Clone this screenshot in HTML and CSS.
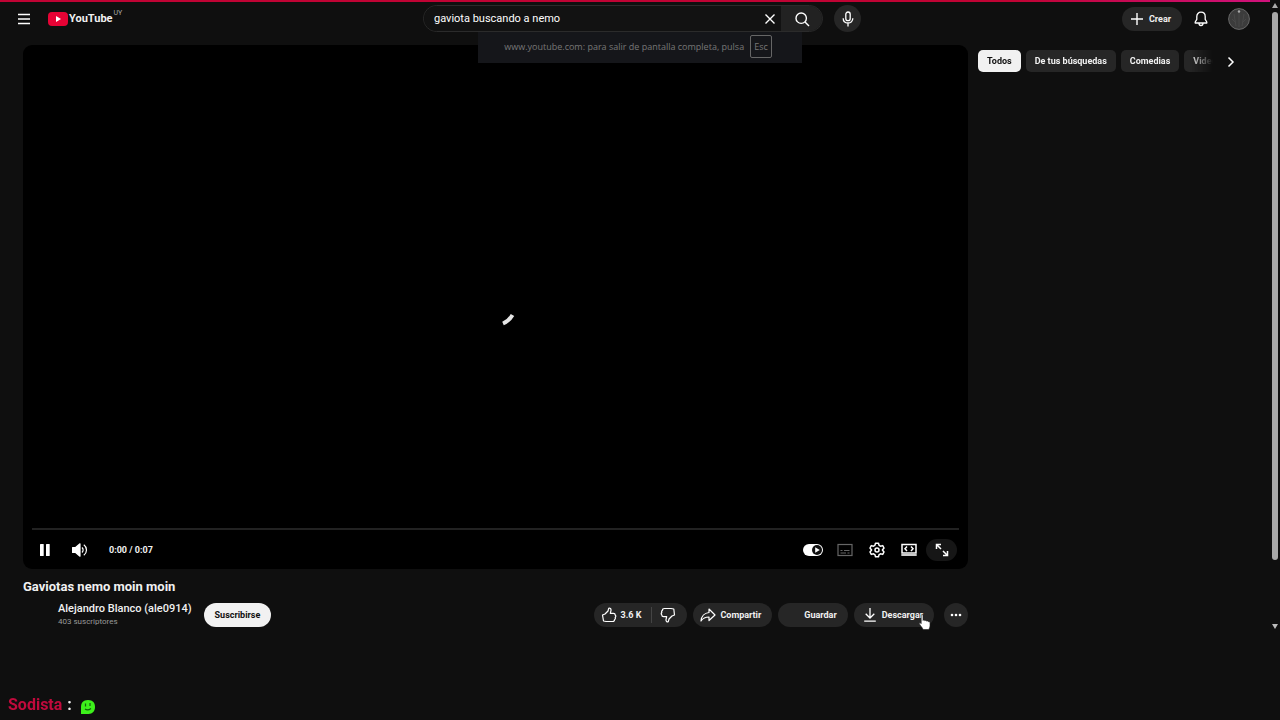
FILE: index.html
```
<!DOCTYPE html>
<html lang="es">
<head>
  <meta charset="UTF-8">
  <meta name="viewport" content="width=device-width, initial-scale=1">
  <title>Gaviotas nemo moin moin - YouTube</title>
  <link rel="stylesheet" href="styles.css">
</head>
<body>
  <div class="load-bar"></div>

  <header class="topbar">
    <div class="topbar-start">
      <button class="icon-btn" aria-label="Menú">
        <svg width="14" height="14" viewBox="0 0 14 14"><path d="M1 2.500h12M1 7h12M1 11.500h12" stroke="#fff" stroke-width="1.500"/></svg>
      </button>
      <a class="logo" href="#">
        <svg width="20" height="14" viewBox="0 0 20 14"><rect width="20" height="14" rx="4" fill="#e60335"/><path d="M8 4l5 3-5 3z" fill="#fff"/></svg>
        <span class="logo-name">YouTube</span>
        <span class="logo-country">UY</span>
      </a>
    </div>

    <div class="topbar-center">
      <form class="search">
        <input class="search-input" type="text" aria-label="Buscar" value="gaviota buscando a nemo">
        <button class="search-clear" type="button" aria-label="Borrar">
          <svg width="12" height="12" viewBox="0 0 12 12"><path d="M1.500 1.500l9 9M10.500 1.500l-9 9" stroke="#fff" stroke-width="1.400"/></svg>
        </button>
        <button class="search-btn" type="button" aria-label="Buscar">
          <svg width="16" height="16" viewBox="0 0 16 16" fill="none" stroke="#fff" stroke-width="1.400"><circle cx="7.200" cy="7.200" r="5.200"/><path d="M11 11l4 4"/></svg>
        </button>
      </form>
      <button class="round-btn" aria-label="Buscar por voz">
        <svg width="14" height="16" viewBox="0 0 14 16" fill="none" stroke="#fff" stroke-width="1.300"><rect x="4.800" y="1" width="4.400" height="8.600" rx="2.200"/><path d="M2.200 7.200c0 3 2 4.800 4.800 4.800s4.800-1.800 4.800-4.800M7 12v3.500"/></svg>
      </button>
    </div>

    <div class="topbar-end">
      <button class="pill create">
        <svg width="14" height="14" viewBox="0 0 14 14"><path d="M7 1v12M1 7h12" stroke="#fff" stroke-width="1.400"/></svg>
        Crear
      </button>
      <button class="icon-btn" aria-label="Notificaciones">
        <svg width="16" height="16" viewBox="0 0 16 16" fill="none" stroke="#fff" stroke-width="1.300" stroke-linejoin="round"><path d="M8 1.200c-2.600 0-4.200 1.900-4.200 4.200v3L2.200 11v1h11.600v-1l-1.600-2.600v-3C12.200 3.100 10.600 1.200 8 1.200zM6 12.200c0 1.400.8 2.300 2 2.300s2-.9 2-2.300"/></svg>
      </button>
      <button class="icon-btn" aria-label="Cuenta">
        <svg width="22" height="22" viewBox="0 0 22 22"><circle cx="11" cy="11" r="10.400" fill="#3c3c3c" stroke="#686868"/><path d="M11 3v16M6 6l2 12M16 6l-2 12M4 11l4 4M18 11l-4 4" stroke="#484848"/><circle cx="11" cy="3.500" r="1.200" fill="#aaa"/></svg>
      </button>
    </div>
  </header>

  <div class="fullscreen-note">
    <span>www.youtube.com: para salir de pantalla completa, pulsa</span>
    <kbd>Esc</kbd>
  </div>

  <main class="watch">
    <section class="primary">
      <div class="player">
        <div class="player-view">
          <svg class="spinner" width="50" height="50" viewBox="0 0 50 50"><path d="M32 36.500Q38 34 41.500 28" fill="none" stroke="#e6e6e6" stroke-width="4"/></svg>
        </div>
        <div class="progress"></div>
        <div class="controls">
          <button class="icon-btn" aria-label="Pausa">
            <svg width="12" height="14" viewBox="0 0 12 14" fill="#fff"><rect x="1" y="1" width="3.700" height="12" rx=".5"/><rect x="7" y="1" width="3.700" height="12" rx=".5"/></svg>
          </button>
          <button class="icon-btn" aria-label="Silenciar">
            <svg width="16" height="14" viewBox="0 0 16 14" fill="none" stroke="#fff" stroke-width="1.200"><path d="M.6 4.500v5h3L8 13.200V.8L3.600 4.500z" fill="#fff" stroke-linejoin="round"/><path d="M10 4.500c1.500 1.400 1.500 3.600 0 5M11.800 1.800c3.600 2.600 3.600 7.800 0 10.400"/></svg>
          </button>
          <span class="time">0:00 / 0:07</span>
          <div class="controls-end">
            <button class="icon-btn" aria-label="Reproducción automática">
              <svg width="22" height="14" viewBox="0 0 22 14"><rect x="1" y="1" width="20" height="12" rx="6" fill="#fff"/><circle cx="15" cy="7" r="5" fill="#111"/><path d="M13.200 4.200l4.600 2.800-4.600 2.800z" fill="#fff"/></svg>
            </button>
            <button class="icon-btn" aria-label="Subtítulos">
              <svg width="16" height="14" viewBox="0 0 16 14" fill="none" stroke="#666" stroke-width="1.200"><rect x="1" y="1.500" width="14" height="11"/><path d="M3.500 7.500h2M7 7.500h5.500M3.500 10h5.500M10.500 10h2"/></svg>
            </button>
            <button class="icon-btn" aria-label="Configuración">
              <svg width="16" height="16" viewBox="0 0 16 16" fill="none" stroke="#fff" stroke-width="1.500" stroke-linejoin="round"><path d="M6.500 1.200h3l.6 2.200 1.400.8 2.200-.6 1.300 2.400L13.400 8l1.600 2-1.300 2.400-2.200-.6-1.400.8-.6 2.200h-3l-.6-2.200-1.400-.8-2.200.6L1 10l1.600-2L1 6l1.300-2.400 2.200.6 1.400-.8z"/><circle cx="8" cy="8" r="2"/></svg>
            </button>
            <button class="icon-btn" aria-label="Modo cine">
              <svg width="16" height="14" viewBox="0 0 16 14" fill="none" stroke="#fff" stroke-width="1.500"><rect x="1" y="1.500" width="14" height="8.500"/><path d="M6 3.500L4 5.700l2 2.200M10 3.500l2 2.200-2 2.200"/><path d="M.3 12h15.400" stroke="#ccc" stroke-width="2"/></svg>
            </button>
            <button class="fullscreen-btn" aria-label="Pantalla completa">
              <svg width="14" height="14" viewBox="0 0 14 14" fill="none" stroke="#fff" stroke-width="1.500"><path d="M1.500 6V1.500H6M1.500 1.500L6 6M12.500 8v4.500H8M12.500 12.500L8 8"/></svg>
            </button>
          </div>
        </div>
      </div>

      <h1 class="title">Gaviotas nemo moin moin</h1>

      <div class="meta">
        <div class="channel">
          <a class="channel-name" href="#">Alejandro Blanco (ale0914)</a>
          <span class="channel-subs">403 suscriptores</span>
        </div>
        <button class="pill subscribe">Suscribirse</button>

        <div class="actions">
          <div class="votes">
            <button class="pill like">
              <svg width="16" height="16" viewBox="0 0 16 16" fill="none" stroke="#fff" stroke-width="1.200" stroke-linejoin="round"><path d="M4 7L1.500 8l1 6L5 14.500h6.500c1.500 0 2-.8 2-1.800.8-.5 1-1.500.7-2.200.7-.8.7-1.800 0-2.500 0-1-.7-1.700-1.700-1.700H9.300l.7-3C10.200 1.800 9 .8 7.700 1.300L7 4z"/></svg>
              3.6 K
            </button>
            <button class="pill dislike" aria-label="No me gusta">
              <svg width="16" height="16" viewBox="0 0 16 16" fill="none" stroke="#fff" stroke-width="1.200" stroke-linejoin="round"><path d="M12 9l2.500-1-.7-6L11 1.500H4.500c-1.500 0-2 .8-2 1.800-.8.500-1 1.500-.7 2.200-.7.800-.7 1.800 0 2.500 0 1 .7 1.700 1.700 1.700h3.200l-.7 3c-.2 1.500 1 2.500 2.300 2L9 12z"/></svg>
            </button>
          </div>
          <button class="pill">
            <svg width="16" height="16" viewBox="0 0 16 16" fill="none" stroke="#fff" stroke-width="1.200" stroke-linejoin="round"><path d="M9 2l6 6-6 5.500V10c-3.500 0-6 1-8 4 .4-4.500 3.500-8 8-8.500z"/></svg>
            Compartir
          </button>
          <button class="pill save">Guardar</button>
          <button class="pill download">
            <svg width="14" height="16" viewBox="0 0 14 16" fill="none" stroke="#fff" stroke-width="1.300"><path d="M7 1v10M2.700 6.800L7 11l4.300-4.200M1.200 14.200h11.600"/></svg>
            Descargar
            <svg class="pointer" width="12" height="16" viewBox="0 0 12 16" fill="#fff" stroke="#222" stroke-width=".6"><path d="M2.200 1.500c0-1.200 1.800-1.200 1.800 0v5c.3-.8 1.800-.6 1.900.3.300-.7 1.700-.5 1.800.4.400-.6 1.700-.3 1.700.6.500-.4 1.600 0 1.600.8v3c0 2-.8 2.400-1 3.900H4c0-1.500-3.400-4.500-3.700-6 0-.9 1.200-.9 1.900.2z"/></svg>
          </button>
          <button class="round-btn more" aria-label="Más acciones">
            <svg width="12" height="4" viewBox="0 0 12 4" fill="#fff"><circle cx="2" cy="2" r="1.300"/><circle cx="6" cy="2" r="1.300"/><circle cx="10" cy="2" r="1.300"/></svg>
          </button>
        </div>
      </div>
    </section>

    <aside class="secondary">
      <div class="chips">
        <button class="chip chip-active">Todos</button>
        <button class="chip">De tus búsquedas</button>
        <button class="chip">Comedias</button>
        <button class="chip">Videos</button>
      </div>
      <button class="icon-btn" aria-label="Siguiente">
        <svg width="8" height="12" viewBox="0 0 8 12"><path d="M1.500 1.500L6 6l-4.500 4.500" fill="none" stroke="#fff" stroke-width="1.500"/></svg>
      </button>
    </aside>
  </main>

  <!-- Mensaje del chat -->
  <div class="chat-line">
    <span class="chat-user">Sodista</span>
    <span>:</span>
    <svg width="16" height="16" viewBox="0 0 16 16"><path d="M8 1c5 0 7 3 7 7s-2.500 7-6.500 7H1V8c0-4 2-7 7-7z" fill="#3df01b"/><path d="M5.500 4.500v3M10 4v3M5 10c2 1.500 4 1 6-.5" fill="none" stroke="#12600c" stroke-width="1.200"/></svg>
  </div>

  <div class="scrollbar">
    <svg width="6" height="5" viewBox="0 0 6 5"><path d="M3 0l3 5H0z" fill="#aaa"/></svg>
    <div class="scroll-track"><div class="scroll-thumb"></div></div>
    <svg width="6" height="5" viewBox="0 0 6 5"><path d="M0 0h6L3 5z" fill="#bbb"/></svg>
  </div>
</body>
</html>
```

FILE: styles.css
```
* {
  box-sizing: border-box;
}
body {
  margin: 0;
  min-height: 100vh;
  background-color: #0f0f0f;
  color: #f1f1f1;
  font-family: Roboto, "Liberation Sans", sans-serif;
  font-size: 9px;
  overflow: hidden;
}
button {
  font: inherit;
  color: inherit;
  border: none;
  background: none;
  padding: 0;
  cursor: pointer;
}
svg {
  display: block;
  flex: none;
}
a {
  color: inherit;
  text-decoration: none;
}
.icon-btn {
  display: flex;
  align-items: center;
  justify-content: center;
}
.load-bar {
  position: fixed;
  top: 0;
  left: 0;
  right: 10px;
  height: 2px;
  background: linear-gradient(to right, #c00334 80%, #d0127c);
}

/* Cabecera */
.topbar {
  display: grid;
  grid-template-columns: 1fr 438px 1fr;
  align-items: center;
  height: 37px;
  padding: 0 13px 0 17px;
}
.topbar-start,
.topbar-center,
.topbar-end {
  display: flex;
  align-items: center;
}
.topbar-start {
  gap: 17px;
}
.logo {
  display: flex;
  align-items: center;
  gap: 1px;
}
.logo-name {
  font-size: 11px;
  font-weight: 700;
}
.logo-country {
  align-self: flex-start;
  margin-top: -3px;
  font-size: 7px;
  color: #aaa;
}
.topbar-center {
  justify-content: space-between;
}
.search {
  display: flex;
  width: 400px;
  height: 27px;
  border: 1px solid #2b2b2b;
  border-radius: 14px;
  overflow: hidden;
}
.search-input {
  flex: 1;
  min-width: 0;
  padding: 0 10px;
  border: none;
  outline: none;
  background-color: #121212;
  color: #fff;
  font: 400 11px Roboto, sans-serif;
}
.search-clear {
  display: flex;
  align-items: center;
  justify-content: center;
  width: 22px;
  background-color: #121212;
}
.search-btn {
  display: flex;
  align-items: center;
  justify-content: center;
  width: 41px;
  background-color: #222;
}
.round-btn {
  display: flex;
  align-items: center;
  justify-content: center;
  width: 27px;
  height: 27px;
  border-radius: 50%;
  background-color: #262626;
}
.topbar-end {
  justify-content: flex-end;
  gap: 11px;
  padding-right: 17px;
}
.topbar-end .icon-btn + .icon-btn {
  margin-left: 8px;
}
.pill {
  display: flex;
  align-items: center;
  gap: 4px;
  height: 24px;
  padding: 0 11px 0 7px;
  border-radius: 12px;
  background-color: #262626;
  font-weight: 700;
}
.create {
  padding-left: 8px;
  gap: 5px;
}

/* Aviso de pantalla completa */
.fullscreen-note {
  position: absolute;
  top: 32px;
  left: 50%;
  z-index: 2;
  display: flex;
  align-items: center;
  justify-content: center;
  gap: 6px;
  width: 324px;
  height: 31px;
  padding: 0 4px 2px 0;
  transform: translateX(-50%);
  background-color: #15161a;
  color: #777;
  font-family: "Open Sans", "Noto Sans", sans-serif;
  font-size: 9px;
}
.fullscreen-note kbd {
  padding: 4px 3px;
  border: 1px solid #666;
  border-radius: 2px;
  font: inherit;
}

/* Contenido */
.watch {
  display: flex;
  gap: 10px;
  padding: 8px 38px 0 23px;
}
.primary {
  flex: 1;
  min-width: 0;
}
.player {
  display: flex;
  flex-direction: column;
  aspect-ratio: 945 / 524;
  border-radius: 9px;
  background-color: #000;
}
.player-view {
  display: flex;
  flex: 1;
  align-items: center;
  justify-content: center;
  padding-top: 50px;
}
.progress {
  height: 2px;
  margin: 0 9px;
  background-color: #222;
}
.controls {
  display: flex;
  align-items: center;
  height: 39px;
  padding: 0 11px 0 16px;
}
.controls .icon-btn + .icon-btn {
  margin-left: 21px;
}
.time {
  margin-left: 21px;
  font-weight: 700;
}
.controls-end {
  display: flex;
  align-items: center;
  margin-left: auto;
}
.controls .controls-end .icon-btn + .icon-btn {
  margin-left: 16px;
}
.controls-end .icon-btn:first-child {
  margin-right: -3px;
}
.fullscreen-btn {
  display: flex;
  align-items: center;
  justify-content: center;
  width: 31px;
  height: 22px;
  margin-left: 9px;
  border-radius: 11px;
  background-color: #161616;
}
.title {
  margin: 9px 0 0;
  font-size: 13px;
  line-height: 18px;
  font-weight: 700;
}
.meta {
  display: flex;
  align-items: center;
  margin-top: 5px;
}
.channel {
  display: flex;
  flex-direction: column;
  padding-left: 35px;
  margin-right: 12px;
}
.channel-name {
  font-size: 11px;
  line-height: 15px;
  font-weight: 500;
}
.channel-subs {
  font-size: 8px;
  line-height: 12px;
  color: #999;
}
.subscribe {
  padding: 0 11px;
  background-color: #f1f1f1;
  color: #0f0f0f;
}
.actions {
  display: flex;
  gap: 6px;
  margin-left: auto;
}
.votes {
  display: flex;
}
.like {
  position: relative;
  border-radius: 12px 0 0 12px;
}
.like::after {
  content: "";
  position: absolute;
  right: 0;
  top: 4px;
  bottom: 4px;
  width: 1px;
  background-color: #444;
}
.dislike {
  padding-left: 8px;
  border-radius: 0 12px 12px 0;
}
.save {
  padding-left: 26px;
}
.download {
  position: relative;
  padding-left: 9px;
  gap: 5px;
}
.pointer {
  position: absolute;
  right: 3px;
  bottom: -3px;
}
.more {
  width: 24px;
  height: 24px;
  margin-left: 4px;
}

/* Filtros */
.secondary {
  display: flex;
  align-items: flex-start;
  justify-content: space-between;
  width: 264px;
  padding-top: 5px;
}
.secondary .icon-btn {
  width: 22px;
  height: 24px;
}
.chips {
  display: flex;
  gap: 5px;
  width: 235px;
  overflow: hidden;
  mask-image: linear-gradient(to right, #000 90%, transparent);
}
.chip {
  flex: none;
  height: 22px;
  padding: 0 9px;
  border-radius: 5px;
  background-color: #262626;
  font-weight: 700;
}
.chip-active {
  background-color: #f1f1f1;
  color: #0f0f0f;
}

.chat-line {
  position: fixed;
  left: 8px;
  bottom: 5px;
  display: flex;
  align-items: center;
  gap: 5px;
  font-size: 16px;
  line-height: 20px;
  font-weight: 700;
}
.chat-line svg {
  margin: 4px 0 0 3px;
}
.chat-user {
  color: #c00a3c;
}

.scrollbar {
  position: fixed;
  top: 3px;
  right: 2px;
  display: flex;
  flex-direction: column;
  gap: 4px;
  height: 87vh;
}
.scroll-track {
  flex: 1;
}
.scroll-thumb {
  height: 90%;
  border-radius: 3px;
  background-color: #a8a8a8;
}
```
